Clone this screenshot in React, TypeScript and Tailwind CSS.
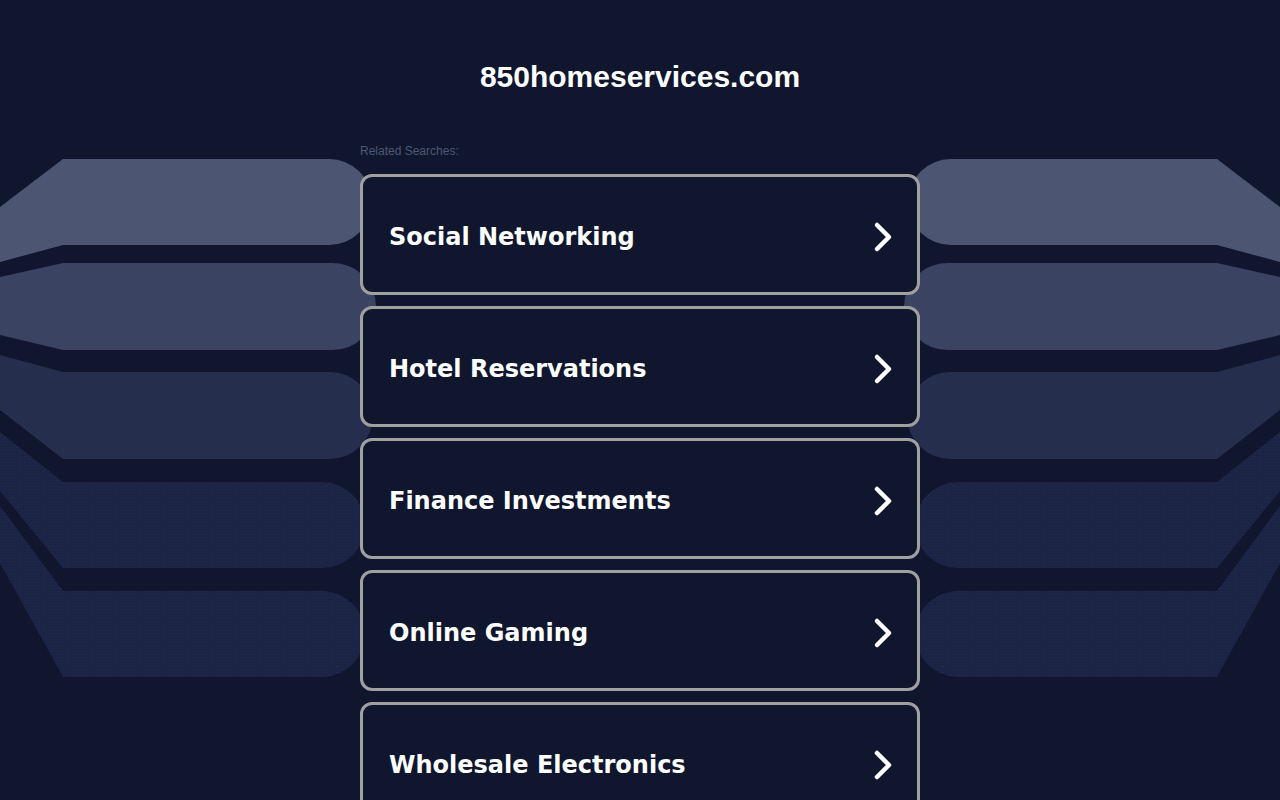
import React from "react";

type Shape = { T: number; B: number; lt: number; lb: number; color: string; dotted?: boolean; R: number };

const shapes: Shape[] = [
  { T: 159, B: 245, lt: 207, lb: 262, color: "#4c5672", R: 372 },
  { T: 263, B: 350, lt: 277, lb: 335, color: "#3a4362", R: 376 },
  { T: 372, B: 459, lt: 355, lb: 410, color: "#262e4d", R: 373 },
  { T: 482, B: 568, lt: 432, lb: 491, color: "#1c2446", dotted: true, R: 365 },
  { T: 591, B: 677, lt: 506, lb: 563, color: "#1c2446", dotted: true, R: 365 },
];

function leftPath(s: Shape) {
  const r = (s.B - s.T) / 2;
  return `M0 ${s.lt} L63 ${s.T} L${s.R - r} ${s.T} A${r} ${r} 0 0 1 ${s.R - r} ${s.B} L63 ${s.B} L0 ${s.lb} Z`;
}

function Background() {
  return (
    <svg
      className="absolute left-0 top-0 w-[1280px] h-[800px]"
      viewBox="0 0 1280 800"
      xmlns="http://www.w3.org/2000/svg"
    >
      <defs>
        <pattern id="dots" width="3" height="3" patternUnits="userSpaceOnUse">
          <rect x="0" y="0" width="1" height="1" fill="#2a3358" opacity="0.35" />
        </pattern>
      </defs>
      {shapes.map((s, i) => (
        <g key={i}>
          <path d={leftPath(s)} fill={s.color} />
          {s.dotted && <path d={leftPath(s)} fill="url(#dots)" />}
          <g transform="translate(1280 0) scale(-1 1)">
            <path d={leftPath(s)} fill={s.color} />
            {s.dotted && <path d={leftPath(s)} fill="url(#dots)" />}
          </g>
        </g>
      ))}
    </svg>
  );
}

const items = [
  "Social Networking",
  "Hotel Reservations",
  "Finance Investments",
  "Online Gaming",
  "Wholesale Electronics",
];

function Card({ label }: { label: string }) {
  return (
    <a
      href="#"
      className="flex items-center justify-between h-[121px] rounded-[12px] border-[3px] border-[#a0a0a0] bg-[#10162d] pl-[26px] pr-[24px]"
    >
      <span
        className="text-white font-bold text-[24px] leading-[30px] translate-y-[2px]"
        style={{ fontFamily: '"DejaVu Sans", Verdana, sans-serif' }}
      >
        {label}
      </span>
      <svg width="20" height="32" viewBox="0 0 20 32" className="translate-y-[2px]">
        <polyline
          points="4,4 16,16 4,28"
          fill="none"
          stroke="#ffffff"
          strokeWidth="4.5"
          strokeLinecap="round"
          strokeLinejoin="round"
        />
      </svg>
    </a>
  );
}

export default function App() {
  return (
    <div className="relative min-h-[800px] h-[800px] w-full overflow-hidden bg-[#10162d]">
      <Background />
      <div className="relative z-10 mx-auto w-[560px]">
        <h1
          className="pt-[59px] text-center text-[30px] leading-[36px] font-bold text-white"
          style={{ fontFamily: '"Liberation Sans", Arial, sans-serif' }}
        >
          850homeservices.com
        </h1>
        <div
          className="mt-[48px] text-[12px] leading-[16px] text-[#4e5877]"
          style={{ fontFamily: '"Liberation Sans", Arial, sans-serif' }}
        >
          Related Searches:
        </div>
        <div className="mt-[15px] flex flex-col gap-[11px]">
          {items.map((it) => (
            <Card key={it} label={it} />
          ))}
        </div>
      </div>
    </div>
  );
}
